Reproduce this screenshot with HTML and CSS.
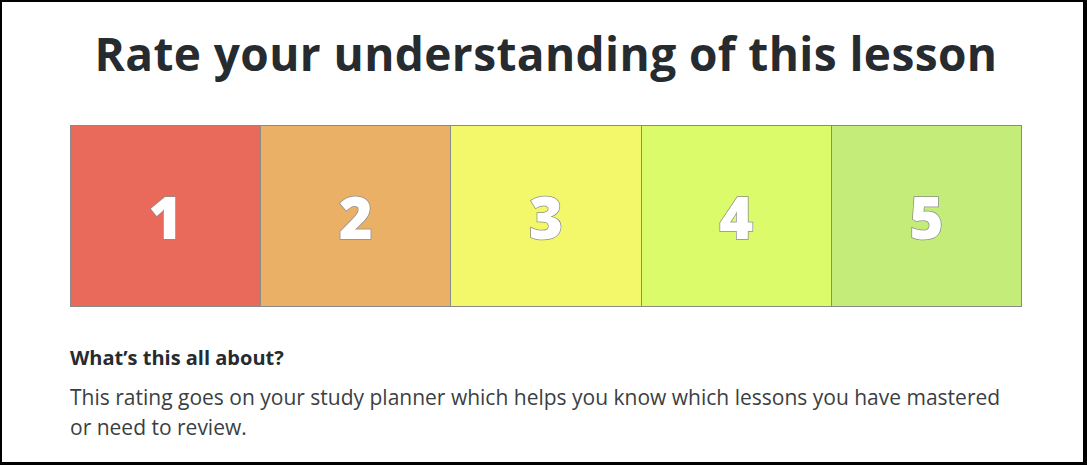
FILE: index.html
```html
<!DOCTYPE html>
<html>

<head>
    <title>Rate your understanding</title>
    <link rel="stylesheet" href="styles.css">
</head>

<body>
    <div class="frame">
        <div class="container">
            <h1>Rate your understanding of this lesson</h1>

            <div class="scale">
                <button class="rate rate-1">1</button>
                <button class="rate rate-2">2</button>
                <button class="rate rate-3">3</button>
                <button class="rate rate-4">4</button>
                <button class="rate rate-5">5</button>
            </div>

            <div class="about">
                <h2>What’s this all about?</h2>
                <p>This rating goes on your study planner which helps you know which lessons you have mastered or need to review.</p>
            </div>
        </div>
    </div>
</body>

</html>
```

FILE: styles.css
```css
body {
    margin: 0;
    font-family: "Open Sans", sans-serif;
    background-color: #fff;
}

.frame {
    box-sizing: border-box;
    width: 1087px;
    height: 465px;
    border-style: solid;
    border-color: #000;
    border-width: 2px 4px 3px 2px;
    padding: 0 61px 0 68px;
}

.container {
    width: 952px;
}

h1 {
    margin: 0;
    padding-top: 20px;
    height: 123px;
    box-sizing: border-box;
    text-align: center;
    color: #262b2f;
    font-size: 46px;
    font-weight: 700;
    letter-spacing: 0.4px;
}

.scale {
    display: flex;
    border: 1px solid #8a8a8a;
    height: 180px;
}

.rate {
    flex: 1;
    border: none;
    border-left: 1px solid #8a8a8a;
    padding: 0;
    font-family: "Open Sans", sans-serif;
    font-size: 58px;
    font-weight: 800;
    color: #fff;
    -webkit-text-stroke: 1.5px #8d8d8d;
    paint-order: stroke fill;
    cursor: pointer;
}

.rate:first-child {
    border-left: none;
}

.rate-1 { background-color: #e96a5a; }
.rate-2 { background-color: #e9b066; }
.rate-3 { background-color: #f3f86b; }
.rate-4 { background-color: #dbfb6a; }
.rate-5 { background-color: #c4ec78; }

.about {
    padding-top: 37px;
}

.about h2 {
    margin: 0 0 10px;
    font-size: 20px;
    line-height: 28px;
    font-weight: 700;
    color: #262b2f;
}

.about p {
    margin: 0;
    font-size: 21px;
    line-height: 30px;
    color: #3a3f43;
}
```
